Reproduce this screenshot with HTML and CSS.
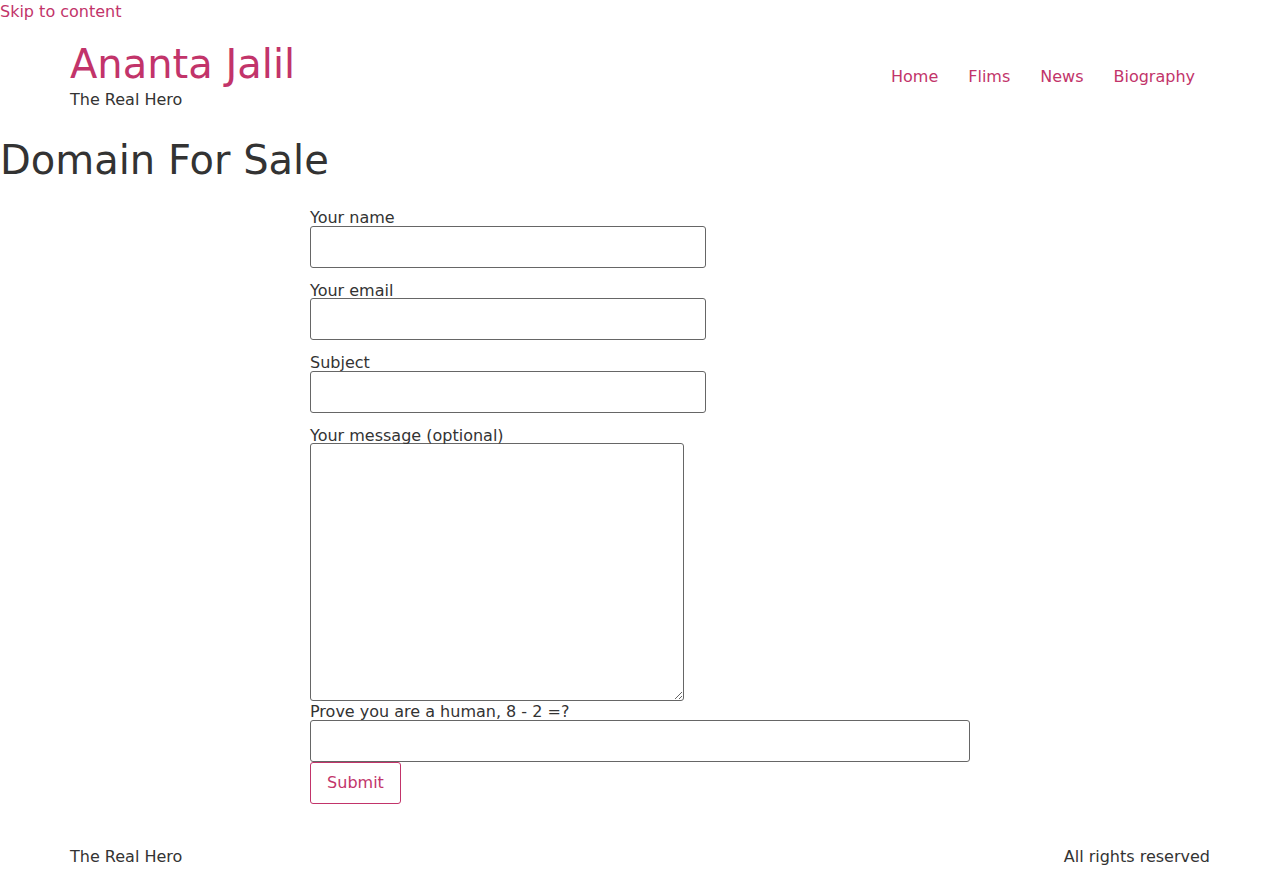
FILE: index.html
```html
<!DOCTYPE html>
<html lang="en">
<head>
<meta charset="utf-8">
<title>Domain For Sale – Ananta Jalil</title>
<link rel="stylesheet" href="styles.css">
</head>
<body>
<a class="skip-link" href="#content">Skip to content</a>
<header class="site-header">
  <div class="branding">
    <a class="site-title" href="#">Ananta Jalil</a>
    <p class="site-description">The Real Hero</p>
  </div>
  <nav class="main-nav">
    <a href="#">Home</a>
    <a href="#">Flims</a>
    <a href="#">News</a>
    <a href="#">Biography</a>
  </nav>
</header>
<main id="content">
  <h1 class="page-title">Domain For Sale</h1>
  <form class="contact-form">
    <div class="field">
      <label for="f-name">Your name</label>
      <input id="f-name" type="text">
    </div>
    <div class="field">
      <label for="f-email">Your email</label>
      <input id="f-email" type="email">
    </div>
    <div class="field">
      <label for="f-subject">Subject</label>
      <input id="f-subject" type="text">
    </div>
    <div class="field field-tight">
      <label for="f-msg">Your message (optional)</label>
      <textarea id="f-msg"></textarea>
    </div>
    <div class="field field-tight">
      <label for="f-quiz">Prove you are a human, 8 - 2 =?</label>
      <input id="f-quiz" class="quiz" type="text">
    </div>
    <button type="submit" class="submit">Submit</button>
  </form>
</main>
<footer class="site-footer">
  <span>The Real Hero</span>
  <span>All rights reserved</span>
</footer>
</body>
</html>
```
FILE: styles.css
```css
* { box-sizing: border-box; }
body {
  margin: 0;
  font-family: "DejaVu Sans", "Liberation Sans", sans-serif;
  font-size: 16px;
  color: #333;
  background: #fff;
}
a { color: #c2346a; text-decoration: none; }

.skip-link {
  display: block;
  width: max-content;
  line-height: 24px;
}

.site-header {
  max-width: 1140px;
  margin: 0 auto;
  padding: 16px 0 24px;
  display: flex;
  justify-content: space-between;
  align-items: center;
}
.site-title {
  display: block;
  font-size: 40px;
  line-height: 49px;
}
.site-description {
  margin: -1px 0 0;
  line-height: 24px;
}
.main-nav {
  display: flex;
}
.main-nav a {
  padding: 0 15px;
  line-height: normal;
}

.page-title {
  margin: 0 0 22px;
  font-size: 40px;
  font-weight: normal;
  line-height: 49px;
}

.contact-form {
  width: 660px;
  margin-left: 310px;
}
.field { margin-bottom: 12px; }
.field-tight { margin-bottom: 0; }
.field label {
  display: block;
  padding-top: 3px;
  line-height: 15.6px;
}
.field input,
.field textarea {
  display: block;
  width: 396px;
  height: 42px;
  margin: 0;
  border: 1px solid #666;
  border-radius: 3px;
  background: #fff;
  font: inherit;
  color: #333;
  padding: 8px 12px;
}
.field textarea {
  width: 374px;
  height: 258px;
  padding: 2px;
}
.field input.quiz { width: 660px; }

.submit {
  display: block;
  width: 91px;
  height: 42px;
  padding: 0;
  border: 1px solid #c2346a;
  border-radius: 3px;
  background: #fff;
  color: #c2346a;
  font: inherit;
}

.site-footer {
  max-width: 1140px;
  margin: 0 auto;
  padding: 41px 0 17px;
  display: flex;
  justify-content: space-between;
  line-height: 24px;
}
```
